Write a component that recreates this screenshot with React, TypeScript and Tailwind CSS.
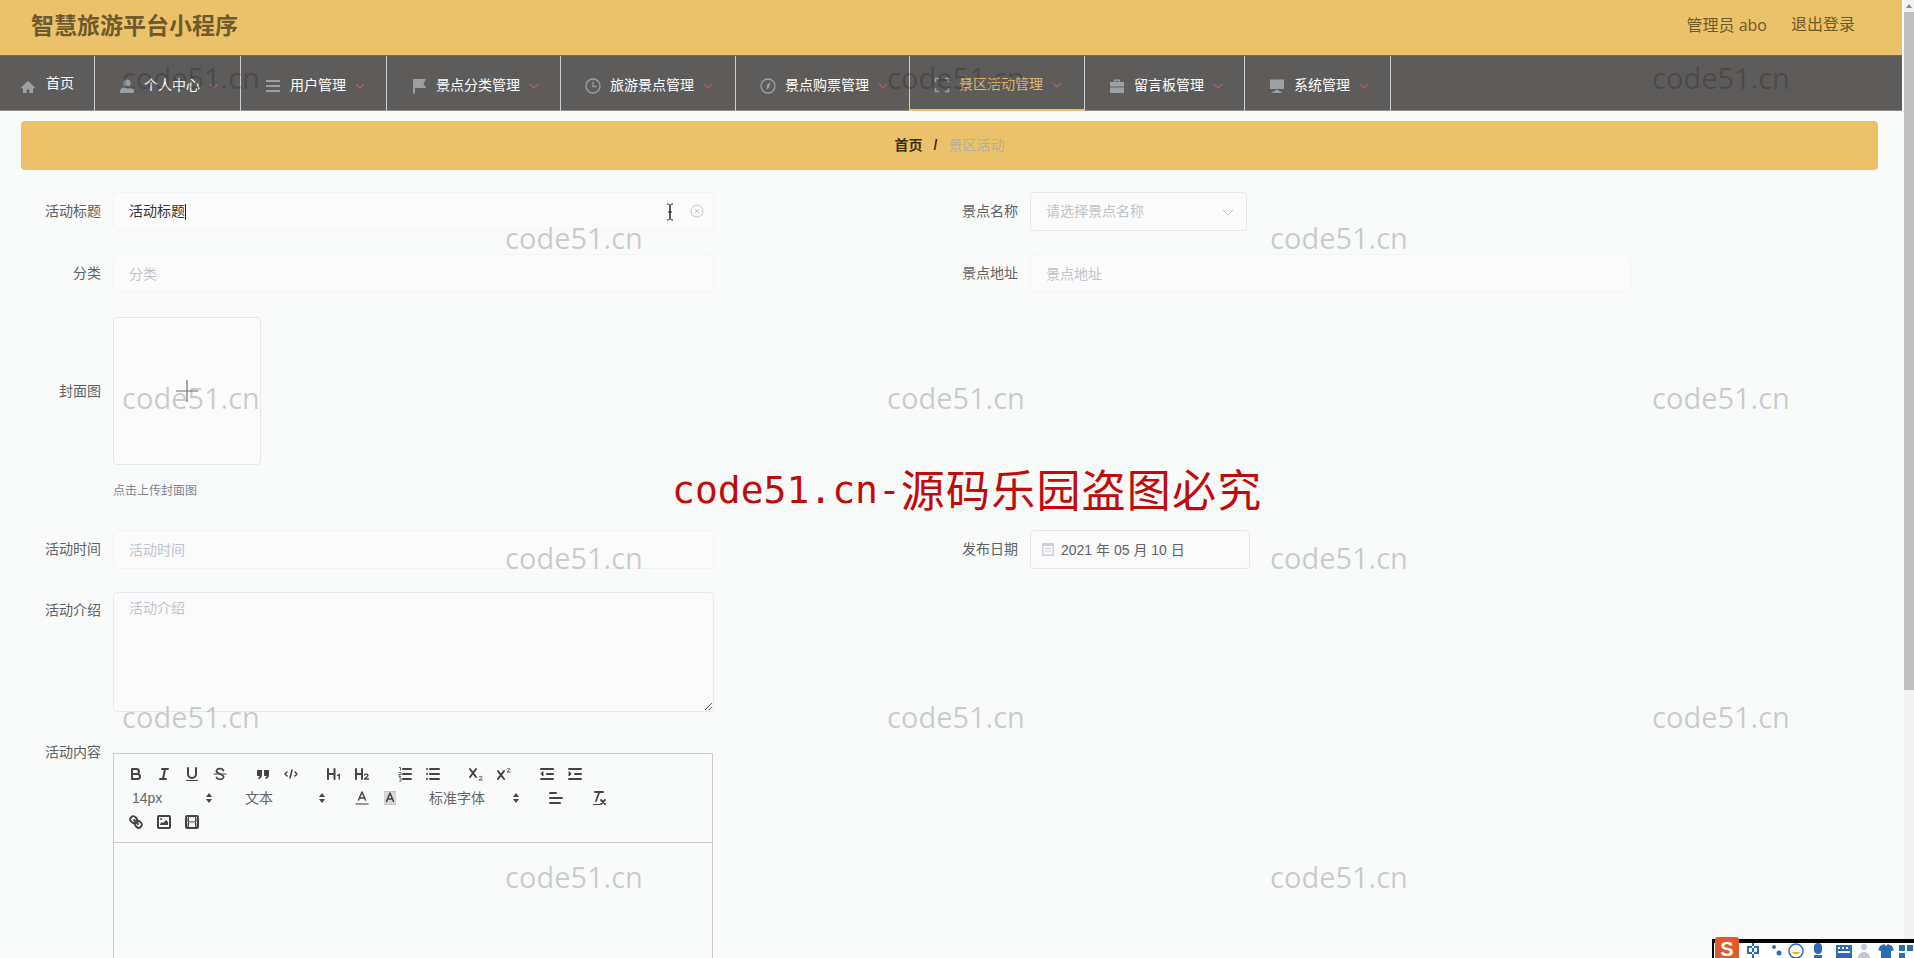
import React from "react";

const cjk = "font-['Liberation_Sans','Noto_Sans_CJK_SC',sans-serif]";

function NavIcon({ name }: { name: string }) {
  const c = "#9ba0a5";
  const common = { width: 16, height: 16, viewBox: "0 0 16 16", className: "shrink-0" };
  switch (name) {
    case "home":
      return <svg {...common}><path fill={c} d="M8 2 1 8.5 2 9.7l1-.9V14h3.6v-3.6h2.8V14H13V8.8l1 .9 1-1.2z" /></svg>;
    case "user":
      return <svg {...common}><circle cx="8" cy="5" r="3.6" fill={c} /><path fill={c} d="M1 15v-2c0-2 2.5-3.3 4-3.5l3 1 3-1c1.500.2 4 1.500 4 3.500v2z" /></svg>;
    case "lines":
      return <svg {...common}><path stroke={c} strokeWidth="2" d="M1 3h14M1 8h14M1 13h14" /></svg>;
    case "flag":
      return <svg {...common}><path fill={c} d="M2 1h13l-2.500 4.500L15 10H4v5.500H2z" /></svg>;
    case "clock":
      return <svg {...common} fill="none"><circle cx="8" cy="8" r="7" stroke={c} strokeWidth="1.300" /><path stroke={c} strokeWidth="1.300" d="M8 3.500V8.500H11.500" /></svg>;
    case "compass":
      return <svg {...common} fill="none"><circle cx="8" cy="8" r="7" stroke={c} strokeWidth="1.300" /><path fill={c} d="M10.800 4 9 9.500 6.500 12 7 7z" /></svg>;
    case "scan":
      return <svg {...common} fill="none"><path stroke={c} strokeWidth="1.500" d="M1.500 11v3.500H5M14.500 11v3.500H11M1.500 5V1.500H5M14.500 5V1.500H11" /></svg>;
    case "case":
      return <svg {...common}><path fill={c} d="M5 4V1.500h6V4h4v4.500H1V4zm1.300 0h3.400V2.800H6.300zM1 9.500h14V15H1z" /></svg>;
    default:
      return <svg {...common}><path fill={c} d="M1 1.500h14V11H1zM6 12h4v1.500h2.500V15h-9v-1.500H6z" /></svg>;
  }
}

function Chevron({ className = "" }: { className?: string }) {
  return (
    <svg width="12" height="12" viewBox="0 0 12 12" fill="none" className={className}>
      <path d="M2 4l4 4 4-4" stroke="#9f5f70" strokeWidth="1.500" />
    </svg>
  );
}

function NavItem({ icon, label, active, wide }: { icon: string; label: string; active?: boolean; wide?: boolean }) {
  return (
    <div className={`flex h-[55px] items-center border-r border-[#cfcfcf] pt-[4px] pl-[24px] ${wide ? "pr-[21px]" : "pr-[20px]"} ${active ? "border-b-2 border-b-[#ebc26a] text-[#dcb96e]" : "text-white"}`}>
      <NavIcon name={icon} />
      <span className="ml-[9px] whitespace-nowrap">{label}</span>
      <Chevron className="ml-[8px]" />
    </div>
  );
}

function Label({ children, top }: { children: React.ReactNode; top?: boolean }) {
  return <div className={`w-[80px] mr-[12px] shrink-0 text-right text-[14px] text-[#606266] ${top ? "leading-[28px] pt-[4px]" : "leading-[39px]"}`}>{children}</div>;
}

function TextField({ placeholder, value }: { placeholder: string; value?: string }) {
  return (
    <input
      readOnly
      placeholder={placeholder}
      defaultValue={value}
      className={`h-[39px] w-[601px] rounded-[4px] border border-[#f3f4f6] bg-[#fbfbfc] px-[15px] text-[14px] text-[#333] outline-none placeholder:text-[#c0c4cc] ${cjk}`}
    />
  );
}

const Q = ({ children }: { children: React.ReactNode }) => (
  <span className="flex h-[24px] w-[28px] items-center justify-center">
    <svg width="18" height="18" viewBox="0 0 18 18" fill="none" stroke="#444" strokeWidth="2" strokeLinecap="round" strokeLinejoin="round">
      {children}
    </svg>
  </span>
);

const Group = ({ children }: { children: React.ReactNode }) => <span className="mr-[15px] flex">{children}</span>;

function Picker({ label, width }: { label: string; width: string }) {
  return (
    <span className={`mr-[15px] flex h-[24px] items-center justify-between pl-[10px] pr-[7px] text-[14px] text-[#666] ${width}`}>
      <span>{label}</span>
      <svg width="8" height="12" viewBox="0 0 8 12"><path fill="#444" d="M4 1l3 4H1zM4 11 1 7h6z" /></svg>
    </span>
  );
}

function Toolbar() {
  return (
    <div className="flex flex-wrap border-b border-[#ccc] p-[8px]">
      <Group>
        <Q>
          <path d="M5 4h4.500a2.500 2.500 0 0 1 0 5H5zM5 9h5.500a2.500 2.500 0 0 1 0 5H5z" />
        </Q>
        <Q>
          <path d="M7 4h6M5 14h6M8 14l2-10" />
        </Q>
        <Q>
          <path d="M5 3v6a4 4 0 0 0 8 0V3" />
          <rect x="3" y="15" width="12" height="1" rx=".5" fill="#444" stroke="none" />
        </Q>
        <Q>
          <path d="M3 9h12" strokeWidth="1.200" />
          <path d="M12.500 5.500C11.500 3 6.500 3 5.500 5.500 5 7 6.500 8 9 9c2.500 1 4 2 3.500 3.500-1 2.500-6 2.500-7 0" strokeWidth="1.800" />
        </Q>
      </Group>
      <Group>
        <Q>
          <path stroke="none" fill="#444" d="M3 5h5v5c0 2.300-1.500 3.500-3.500 4l-.5-1.200c1-.4 1.600-1 1.700-1.800H3zM10 5h5v5c0 2.300-1.500 3.500-3.500 4l-.5-1.200c1-.4 1.600-1 1.700-1.800H10z" />
        </Q>
        <Q>
          <path d="M5 7 3 9l2 2M13 7l2 2-2 2M10 5 8 13" strokeWidth="1.500" />
        </Q>
      </Group>
      <Group>
        <Q>
          <path d="M3 4v10M9.500 4v10M3 9h6.500" />
          <path d="M12.500 10.500l1.800-1.200V14" strokeWidth="1.300" />
        </Q>
        <Q>
          <path d="M3 4v10M9 4v10M3 9h6" />
          <path d="M11.500 10c.5-1.300 3.500-1.300 3.500.5 0 1.200-2.500 2-3.500 3.500H15.500" strokeWidth="1.300" />
        </Q>
      </Group>
      <Group>
        <Q>
          <path d="M7 4h8M7 9h8M7 14h8" />
          <path d="M3 2.500h1.500v3M3 7.500h2v2H3v2h2M3 13h2v3H3" strokeWidth=".8" strokeLinecap="butt" />
        </Q>
        <Q>
          <path d="M6 4h9M6 9h9M6 14h9M3 4h.01M3 9h.01M3 14h.01" />
        </Q>
      </Group>
      <Group>
        <Q>
          <path d="M3 4l6 8M9 4l-6 8" />
          <path d="M12 12c.5-1 2.800-1 2.800.3 0 1-2 1.500-2.800 2.700h3.200" strokeWidth=".9" />
        </Q>
        <Q>
          <path d="M3 6l6 8M9 6l-6 8" />
          <path d="M12 4c.5-1 2.800-1 2.800.3 0 1-2 1.500-2.800 2.700h3.200" strokeWidth=".9" />
        </Q>
      </Group>
      <Group>
        <Q>
          <path d="M3 4h12M3 14h12M9 9h6" />
          <path d="M5 7v4L3 9z" fill="#444" strokeWidth="1" />
        </Q>
        <Q>
          <path d="M3 4h12M3 14h12M9 9h6" />
          <path d="M3 7v4l2-2z" fill="#444" strokeWidth="1" />
        </Q>
      </Group>
      <Picker label="14px" width="w-[98px]" />
      <Picker label="文本" width="w-[98px]" />
      <Group>
        <Q>
          <path d="M5.500 11 9 3l3.500 8M6.400 9h5.200" strokeWidth="1.500" />
          <path d="M3 15h12" stroke="#777" strokeWidth="1.500" />
        </Q>
        <Q>
          <rect x="3" y="2" width="12" height="14" fill="#888" stroke="none" opacity=".45" />
          <path d="M3 4h12M3 6h12M3 8h12M3 10h12M3 12h12M3 14h12" stroke="#fff" strokeWidth=".6" strokeLinecap="butt" />
          <path d="M5.500 12.500 9 4l3.500 8.500M6.400 10h5.200" strokeWidth="1.500" />
        </Q>
      </Group>
      <Picker label="标准字体" width="w-[108px]" />
      <Group>
        <Q>
          <path d="M3 4h6M3 9h12M3 14h10" />
        </Q>
      </Group>
      <Group>
        <Q>
          <path d="M5 3h8M6 12 9.350 3M11 11l4 4M15 11l-4 4" strokeWidth="1.800" />
          <rect x="3" y="15" width="7" height="1" fill="#444" stroke="none" />
        </Q>
      </Group>
      <Group>
        <Q>
          <path d="M7 7l4 4" />
          <path d="M8.900 4.577a3.476 3.476 0 0 1 .36 4.679A3.476 3.476 0 0 1 4.577 8.900C3.185 7.500 2.035 6.400 4.217 4.217S7.500 3.185 8.900 4.577Z" />
          <path d="M13.423 9.100a3.476 3.476 0 0 0-4.679-.36 3.476 3.476 0 0 0 .36 4.679c1.392 1.392 2.500 2.542 4.679.36s1.032-3.279-.36-4.679Z" />
        </Q>
        <Q>
          <rect x="3" y="3" width="12" height="12" rx="1" />
          <circle cx="6" cy="6" r="1" fill="#444" stroke="none" />
          <path d="M5 12v-1l2-2 1 1 3-3 2 2v3z" fill="#444" stroke="none" />
        </Q>
        <Q>
          <rect x="3" y="3" width="12" height="12" rx="1" />
          <path d="M5.500 3v12M12.500 3v12M5.500 9h7M3 6h2.500M3 8h2.500M3 11h2.500M3 13h2.500M12.500 6H15M12.500 8H15M12.500 11H15M12.500 13H15" strokeWidth="1" strokeLinecap="butt" />
        </Q>
      </Group>
    </div>
  );
}

const wmLeft = [191, 956, 1721];
const wmRight = [574, 1339];
const wmRows = [77, 237, 397, 557, 716, 876];
const marks: { x: number; y: number }[] = wmRows.flatMap((y, i) => (i % 2 === 0 ? wmLeft : wmRight).map((x) => ({ x, y })));

function ImeBar() {
  return (
    <div className={`absolute bottom-0 left-[1712px] flex h-[19px] w-[202px] items-start border-l-[2px] border-t-[4px] border-black bg-white ${cjk}`}>
      <div className="absolute left-[1px] top-[-6px] flex h-[24px] w-[24px] items-center justify-center rounded-[3px] bg-[#e0592a] text-[20px] font-bold leading-none text-white">S</div>
      <svg width="200" height="15" viewBox="0 0 200 15" className="shrink-0">
        <g fill="#2a6db5">
          <path d="M33 3h12v8H33zm2 2v4h8V5zM38 0h2v15h-2z" fillRule="evenodd" />
          <circle cx="60" cy="4" r="2" />
          <circle cx="65" cy="10" r="2.500" />
          <path d="M104 0c3 0 4 2 4 4v3c0 2-1 4-4 4s-4-2-4-4V4c0-2 1-4 4-4zM100 12h8v3h-8z" />
          <path d="M122 2h16v13h-16zm2 2v2h2V4zm4 0v2h2V4zm4 0v2h2V4zm-8 4v2h12V8z" fillRule="evenodd" />
          <path d="M166 3l4-2 2 2 2-2 4 2 2 4-3 1v7h-10V8l-3-1z" />
          <path d="M185 2h6v6h-6zM193 2h6v6h-6zM185 10h6v5h-6z" />
        </g>
        <circle cx="82" cy="8" r="7" fill="none" stroke="#2a6db5" strokeWidth="1.500" />
        <path d="M78 9c1 3 7 3 8 0z" fill="#e8b21e" />
        <circle cx="150" cy="4" r="3" fill="#c2c7cf" />
        <path d="M144 15c0-4 3-6 6-6s6 2 6 6z" fill="#c2c7cf" />
      </svg>
    </div>
  );
}

export default function App() {
  return (
    <div className={`relative flex h-[958px] w-[1914px] overflow-hidden bg-[#f9fafa] ${cjk}`}>
      <div className="w-[1902px] shrink-0">
        <header className="flex h-[55px] items-center justify-between bg-[#ebc26a] pl-[31px] pr-[47px] text-[#6e5a2c]">
          <div className="pb-[2px] text-[23px] font-bold leading-none">智慧旅游平台小程序</div>
          <div className="flex gap-[24px] pb-[5px] text-[16px]">
            <span className="font-['Open_Sans','Noto_Sans_CJK_SC',sans-serif]">管理员 abo</span>
            <span>退出登录</span>
          </div>
        </header>
        <nav className="flex h-[56px] border-t border-[#7d6b42] bg-[#5e5c5b] text-[14px] shadow-[inset_0_-1px_0_#8d8c8b]">
          <div className="flex h-[55px] w-[95px] shrink-0 items-center border-r border-[#cfcfcf] pl-[20px] text-white">
            <span className="mt-[6px]"><NavIcon name="home" /></span>
            <span className="ml-[10px]">首页</span>
          </div>
          <NavItem icon="user" label="个人中心" />
          <NavItem icon="lines" label="用户管理" />
          <NavItem icon="flag" label="景点分类管理" />
          <NavItem icon="clock" label="旅游景点管理" wide />
          <NavItem icon="compass" label="景点购票管理" />
          <NavItem icon="scan" label="景区活动管理" active wide />
          <NavItem icon="case" label="留言板管理" />
          <NavItem icon="monitor" label="系统管理" />
        </nav>

        <main className="pl-[21px]">
          <div className="mt-[10px] flex h-[49px] w-[1857px] items-center justify-center rounded-[4px] bg-[#ebc26a] text-[14px]">
            <span className="font-bold text-[#3d2f12]">首页</span>
            <span className="mx-[11px] font-bold text-[#3d2f12]">/</span>
            <span className="text-[#b5ae9f]">景区活动</span>
          </div>

          <div className="mt-[22px] flex h-[39px]">
            <div className="flex w-[917px]">
              <Label>活动标题</Label>
              <div className="relative flex h-[39px] w-[601px] items-center rounded-[4px] border border-[#f3f4f6] bg-[#fbfbfc] pl-[15px] text-[14px] text-[#333]">
                <span>活动标题</span>
                <span className="h-[16px] w-px bg-[#222]" />
                <svg width="10" height="18" viewBox="0 0 10 18" fill="none" className="absolute left-[551px] top-[10px]">
                  <path d="M2 1c2 0 3 .5 3 2v12c0 1.500 1 2 3 2M8 1C6 1 5 1.500 5 3v12c0 1.500-1 2-3 2M3 9h4" stroke="#222" />
                </svg>
                <svg width="14" height="14" viewBox="0 0 14 14" fill="none" className="absolute left-[576px] top-[11px]">
                  <circle cx="7" cy="7" r="6" stroke="#c0c4cc" />
                  <path d="M5 5l4 4M9 5 5 9" stroke="#c0c4cc" />
                </svg>
              </div>
            </div>
            <div className="flex">
              <Label>景点名称</Label>
              <div className="flex h-[39px] w-[217px] items-center justify-between rounded-[4px] border border-[#e4e7ed] bg-[#fbfbfc] pl-[15px] pr-[11px] text-[14px] text-[#c0c4cc]">
                <span>请选择景点名称</span>
                <svg width="14" height="14" viewBox="0 0 14 14" fill="none"><path d="M2 5l5 5 5-5" stroke="#c0c4cc" /></svg>
              </div>
            </div>
          </div>

          <div className="mt-[23px] flex h-[39px]">
            <div className="flex w-[917px]">
              <Label>分类</Label>
              <TextField placeholder="分类" />
            </div>
            <div className="flex">
              <Label>景点地址</Label>
              <TextField placeholder="景点地址" />
            </div>
          </div>

          <div className="mt-[24px] flex">
            <div className="w-[80px] mr-[12px] flex shrink-0 items-center justify-end text-[14px] text-[#606266]">封面图</div>
            <div className="flex h-[148px] w-[148px] items-center justify-center rounded-[4px] border border-[#e4e7ed] bg-[#fbfbfc]">
              <svg width="24" height="24" viewBox="0 0 24 24"><path d="M12 1v22M1 12h22" stroke="#6b7078" strokeWidth="1.200" /></svg>
            </div>
          </div>
          <div className="ml-[92px] mt-[18px] text-[12px] leading-[16px] text-[#7f8792]">点击上传封面图</div>

          <div className="mt-[31px] flex h-[39px]">
            <div className="flex w-[917px]">
              <Label>活动时间</Label>
              <TextField placeholder="活动时间" />
            </div>
            <div className="flex">
              <Label>发布日期</Label>
              <div className="flex h-[39px] w-[220px] items-center rounded-[4px] border border-[#e4e7ed] bg-[#fbfbfc] pl-[11px] pt-[1px] text-[14px] text-[#606266]">
                <svg width="12" height="13" viewBox="0 0 12 13" fill="#cfd2d8" className="mr-[7px] mb-[2px]"><path d="M0 0h12v13H0zm1.500 3v8.500h9V3z" fillRule="evenodd" /><path d="M3 5h6v1H3zM3 7.500h6v1H3z" /></svg>
                <span>2021 年 05 月 10 日</span>
              </div>
            </div>
          </div>

          <div className="mt-[23px] flex">
            <Label top>活动介绍</Label>
            <textarea
              readOnly
              placeholder="活动介绍"
              className={`h-[120px] w-[601px] rounded-[4px] border border-[#e8e9ec] bg-[#fbfbfc] px-[15px] py-[3px] text-[14px] leading-[24px] outline-none placeholder:text-[#c0c4cc] ${cjk}`}
            />
          </div>

          <div className="mt-[41px] flex">
            <div className="-mt-[11px] w-[80px] mr-[12px] shrink-0 text-right text-[14px] leading-[20px] text-[#606266]">活动内容</div>
            <div className="h-[300px] w-[600px] border border-[#ccc]">
              <Toolbar />
            </div>
          </div>
        </main>
      </div>

      <div className="ml-[2px] w-[10px] shrink-0 bg-[#f1f1f1]">
        <div className="flex h-[12px] items-center justify-center">
          <svg width="8" height="5" viewBox="0 0 8 5"><path d="M4 0l3 4H1z" fill="#888" /></svg>
        </div>
        <div className="h-[678px] bg-[#bfbfbf]" />
      </div>

      {marks.map((m) => (
        <div
          key={`${m.x}-${m.y}`}
          className="pointer-events-none absolute -translate-x-1/2 -translate-y-1/2 whitespace-nowrap font-['Open_Sans',sans-serif] text-[29px] leading-none text-black/20"
          style={{ left: m.x, top: m.y }}
        >
          code51.cn
        </div>
      ))}

      <div className="pointer-events-none absolute left-[672px] top-[463px] flex h-[52px] items-center whitespace-nowrap text-[#c10b0b]">
        <span className="mt-[2px] font-['DejaVu_Sans_Mono',monospace] text-[38px] leading-none">code51.cn-</span>
        <span className="mb-[3px] font-['Noto_Sans_CJK_SC',sans-serif] text-[44px] leading-none tracking-[1.2px]">源码乐园盗图必究</span>
      </div>

      <ImeBar />
    </div>
  );
}
